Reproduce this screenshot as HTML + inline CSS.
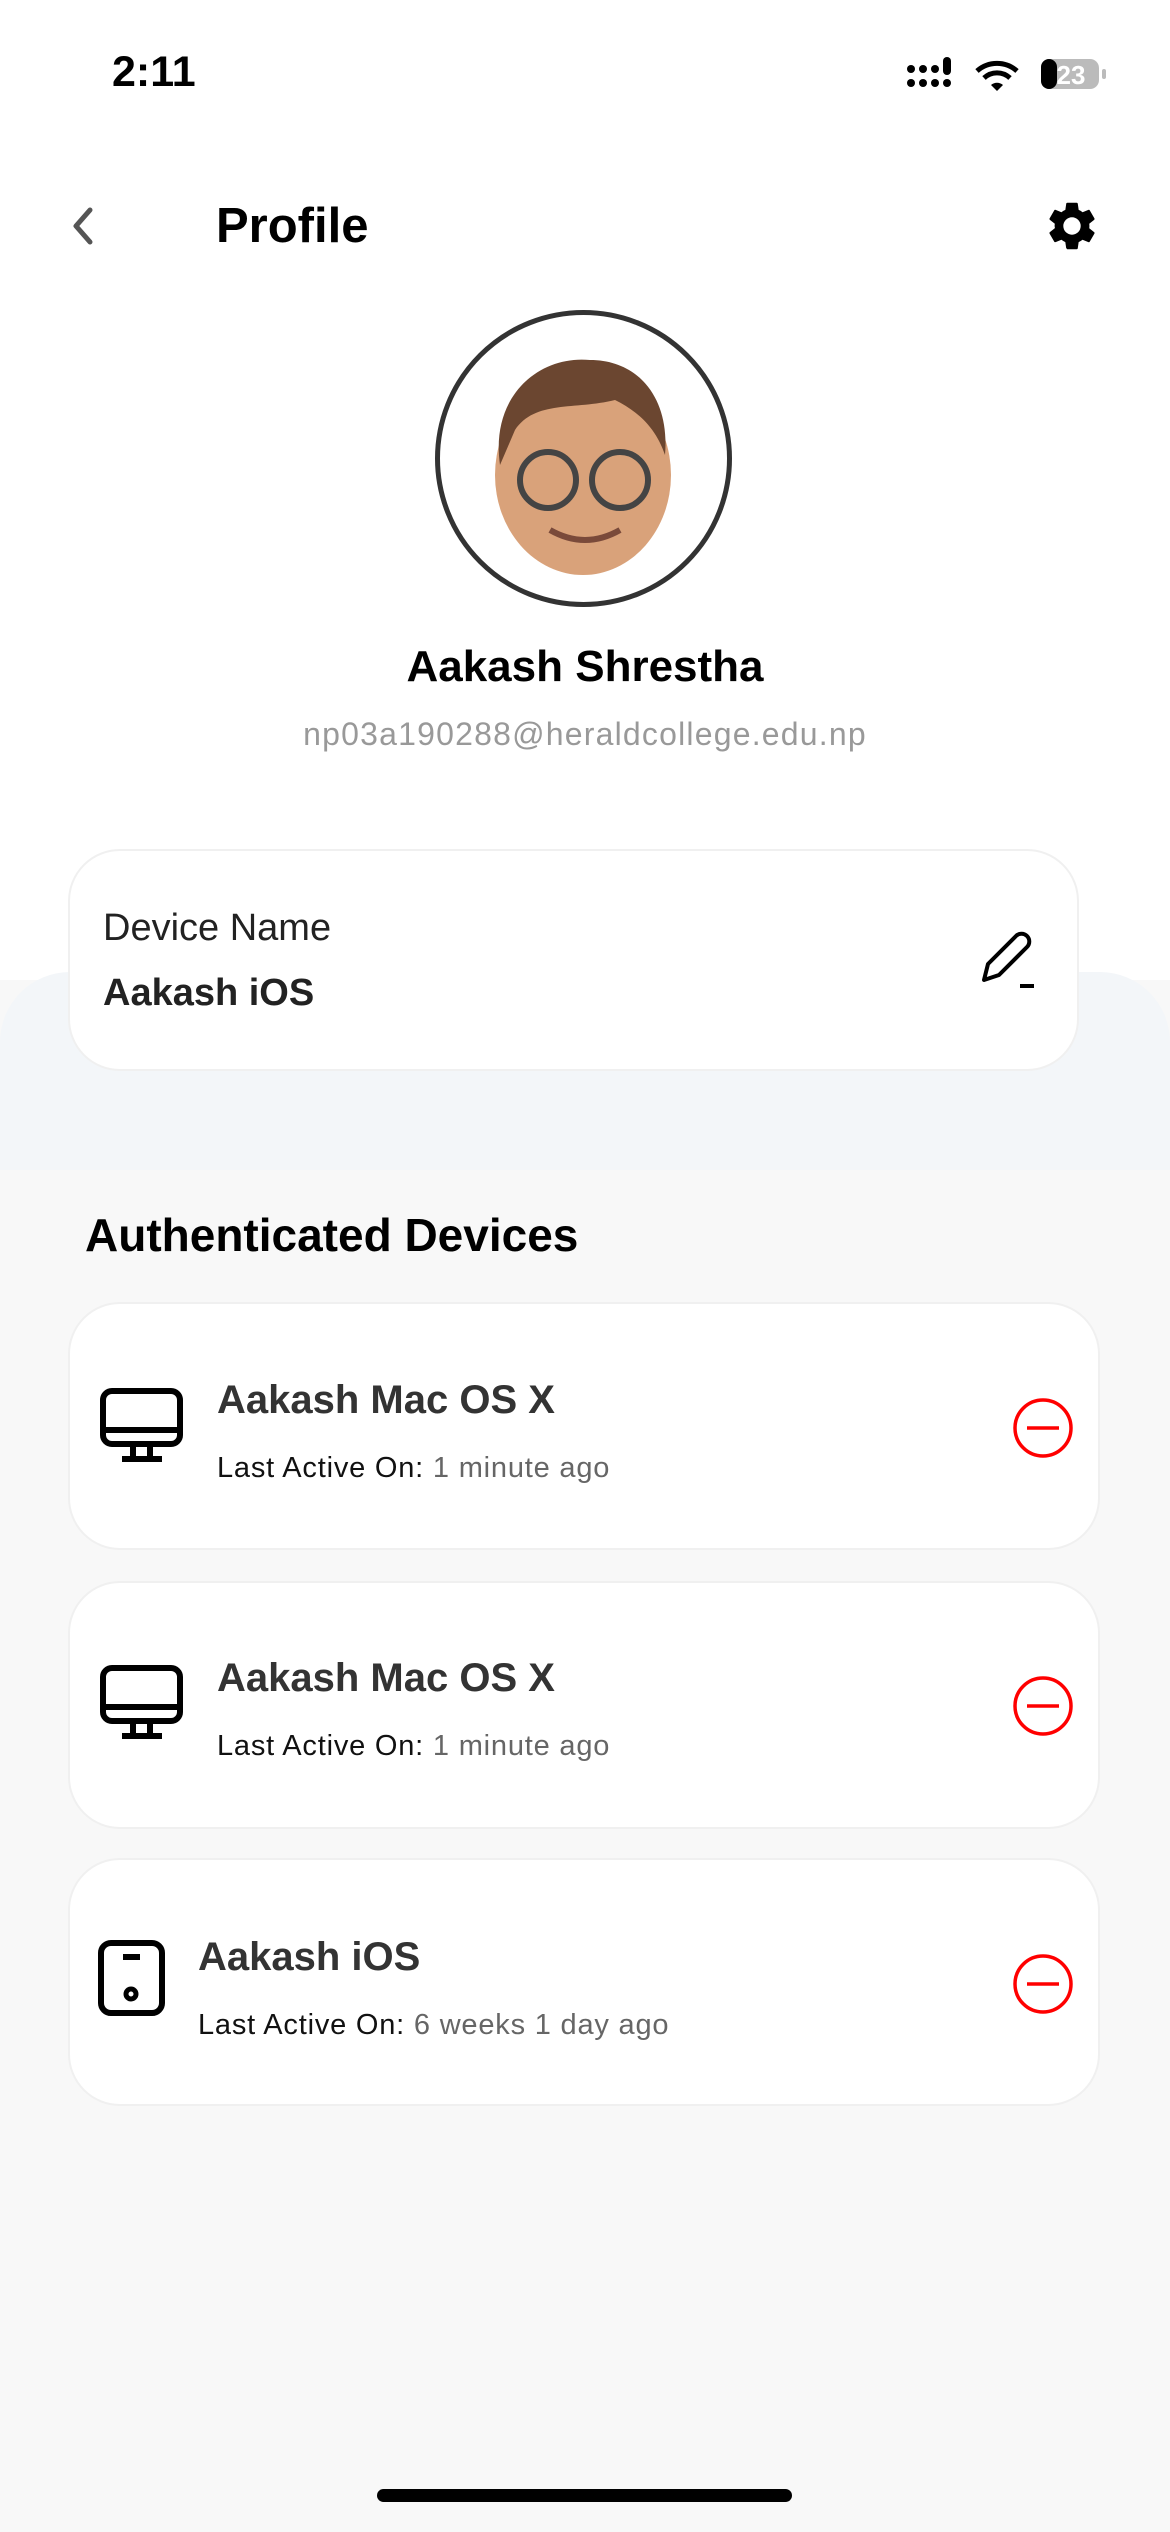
<!DOCTYPE html>
<html><head><meta charset="utf-8"><style>
*{margin:0;padding:0;box-sizing:border-box}
body{width:1170px;height:2532px;position:relative;background:#f8f8f8;font-family:"Liberation Sans",sans-serif;overflow:hidden}
.a{position:absolute}
.top{left:0;top:0;width:1170px;height:980px;background:#fff}
.blue{left:0;top:972px;width:1170px;height:198px;background:#f3f6f9;border-radius:70px 70px 0 0}
.card{background:#fff;border:2px solid #f0f0f0;border-radius:52px}
.t{font-weight:bold;color:#333;font-size:40px;white-space:nowrap}
.s{font-size:29px;color:#111;white-space:nowrap;letter-spacing:0.8px}
.s span{color:#666}
</style></head><body>
<div class="a top"></div>
<div class="a blue"></div>

<div class="a" style="left:112px;top:48px;font-size:43px;font-weight:bold;color:#000">2:11</div>
<svg class="a" style="left:905px;top:55px" width="210" height="40" viewBox="0 0 210 40">
<g fill="#000"><circle cx="6" cy="14" r="4"/><circle cx="18" cy="14" r="4"/><circle cx="30" cy="14" r="4"/><circle cx="42" cy="14" r="4"/>
<circle cx="6" cy="28" r="4"/><circle cx="18" cy="28" r="4"/><circle cx="30" cy="28" r="4"/><circle cx="42" cy="28" r="4"/>
<rect x="38" y="2" width="8" height="18" rx="4"/></g>
<path d="M72 16a30 30 0 0 1 40 0" stroke="#000" stroke-width="5" fill="none"/>
<path d="M79 23a19 19 0 0 1 26 0" stroke="#000" stroke-width="5" fill="none"/>
<path d="M86 30l6 6 6-6a9 9 0 0 0-12 0z" fill="#000"/>
<rect x="136" y="4" width="58" height="30" rx="9" fill="#bbb"/>
<rect x="136" y="4" width="16" height="30" rx="8" fill="#000"/>
<rect x="197" y="14" width="4" height="10" rx="2" fill="#bbb"/>
<text x="166" y="29" font-size="26" font-weight="bold" fill="#fff" text-anchor="middle" font-family="Liberation Sans">23</text>
</svg>

<svg class="a" style="left:68px;top:204px" width="30" height="44" viewBox="0 0 30 44"><path d="M22 6L8 22l14 16" stroke="#555" stroke-width="5" fill="none" stroke-linecap="round" stroke-linejoin="round"/></svg>
<div class="a" style="left:216px;top:198px;font-size:49px;font-weight:bold;color:#000">Profile</div>
<svg class="a" style="left:1043px;top:197px" width="58" height="58" viewBox="0 0 24 24"><path fill="#000" d="M19.14 12.94c.04-.3.06-.61.06-.94s-.02-.64-.07-.94l2.03-1.58a.49.49 0 0 0 .12-.61l-1.92-3.32a.49.49 0 0 0-.59-.22l-2.390.96c-.5-.38-1.030-.7-1.62-.94l-.36-2.54a.48.48 0 0 0-.48-.41h-3.84c-.24 0-.43.17-.47.41l-.36 2.54c-.59.24-1.130.57-1.62.94l-2.39-.96a.48.48 0 0 0-.59.22L2.74 8.87c-.12.21-.08.47.12.61l2.03 1.58c-.05.3-.09.63-.09.94s.2.64.07.94l-2.03 1.58a.49.49 0 0 0-.12.61l1.92 3.32c.12.22.37.29.59.22l2.39-.96c.5.38 1.03.7 1.62.94l.36 2.54c.5.24.24.41.48.41h3.84c.24 0 .44-.17.47-.41l.36-2.54c.59-.24 1.13-.56 1.62-.94l2.39.96c.22.08.47 0 .59-.22l1.92-3.32c.12-.22.07-.47-.12-.61l-2.01-1.58zM12 15.6A3.6 3.6 0 1 1 12 8.4a3.6 3.6 0 0 1 0 7.2z"/></svg>

<div class="a" style="left:435px;top:310px;width:297px;height:297px;border-radius:50%;border:5px solid #333;background:#fff;overflow:hidden">
<svg width="287" height="287" viewBox="0 0 287 287">
<ellipse cx="143" cy="160" rx="88" ry="100" fill="#d9a27a"/>
<path d="M60 150c-10-70 40-110 90-105 50 0 80 40 75 95-10-30-30-45-50-55-40 10-80 0-100 30z" fill="#6b4630"/>
<circle cx="108" cy="165" r="28" fill="none" stroke="#444" stroke-width="6"/>
<circle cx="180" cy="165" r="28" fill="none" stroke="#444" stroke-width="6"/>
<path d="M110 215q35 20 70 0" stroke="#7a4a3a" stroke-width="6" fill="none"/>
</svg></div>

<div class="a" style="left:0;top:642px;width:1170px;text-align:center;font-size:44px;font-weight:bold;color:#000">Aakash Shrestha</div>
<div class="a" style="left:0;top:716px;width:1170px;text-align:center;font-size:32px;color:#999;letter-spacing:1.2px">np03a190288@heraldcollege.edu.np</div>

<div class="a card" style="left:68px;top:849px;width:1011px;height:222px"></div>
<div class="a" style="left:103px;top:907px;font-size:38px;color:#222">Device Name</div>
<div class="a" style="left:103px;top:972px;font-size:38px;font-weight:bold;color:#222">Aakash iOS</div>
<svg class="a" style="left:980px;top:928px" width="60" height="66" viewBox="0 0 60 66"><path d="M4 52l4-16 28-28a7 7 0 0 1 11 11L19 47z" stroke="#000" stroke-width="4" fill="none" stroke-linejoin="round"/><path d="M40 58h14" stroke="#000" stroke-width="4"/></svg>

<div class="a" style="left:85px;top:1208px;font-size:46px;font-weight:bold;color:#000">Authenticated Devices</div>

<div class="a card" style="left:68px;top:1302px;width:1032px;height:248px"></div>
<div class="a card" style="left:68px;top:1581px;width:1032px;height:248px"></div>
<div class="a card" style="left:68px;top:1858px;width:1032px;height:248px"></div>

<svg class="a" style="left:100px;top:1388px" width="84" height="80" viewBox="0 0 84 80"><rect x="3" y="3" width="77" height="53" rx="9" stroke="#000" stroke-width="6" fill="none"/><path d="M3 42h77M33 56v12M50 56v12M22 71h40" stroke="#000" stroke-width="6"/></svg>
<div class="a t" style="left:217px;top:1378px">Aakash Mac OS X</div>
<div class="a s" style="left:217px;top:1452px">Last Active On: <span>1 minute ago</span></div>
<svg class="a" style="left:1012px;top:1397px" width="62" height="62" viewBox="0 0 62 62"><circle cx="31" cy="31" r="28" stroke="#f00" stroke-width="3.5" fill="none"/><path d="M15 31h32" stroke="#f00" stroke-width="3.5"/></svg>

<svg class="a" style="left:100px;top:1665px" width="84" height="80" viewBox="0 0 84 80"><rect x="3" y="3" width="77" height="53" rx="9" stroke="#000" stroke-width="6" fill="none"/><path d="M3 42h77M33 56v12M50 56v12M22 71h40" stroke="#000" stroke-width="6"/></svg>
<div class="a t" style="left:217px;top:1656px">Aakash Mac OS X</div>
<div class="a s" style="left:217px;top:1730px">Last Active On: <span>1 minute ago</span></div>
<svg class="a" style="left:1012px;top:1675px" width="62" height="62" viewBox="0 0 62 62"><circle cx="31" cy="31" r="28" stroke="#f00" stroke-width="3.5" fill="none"/><path d="M15 31h32" stroke="#f00" stroke-width="3.5"/></svg>

<svg class="a" style="left:98px;top:1940px" width="70" height="80" viewBox="0 0 70 80"><rect x="3" y="3" width="61" height="70" rx="10" stroke="#000" stroke-width="6" fill="none"/><path d="M25 17h17" stroke="#000" stroke-width="6"/><circle cx="33" cy="54" r="5" stroke="#000" stroke-width="5" fill="none"/></svg>
<div class="a t" style="left:198px;top:1935px">Aakash iOS</div>
<div class="a s" style="left:198px;top:2009px">Last Active On: <span>6 weeks 1 day ago</span></div>
<svg class="a" style="left:1012px;top:1953px" width="62" height="62" viewBox="0 0 62 62"><circle cx="31" cy="31" r="28" stroke="#f00" stroke-width="3.5" fill="none"/><path d="M15 31h32" stroke="#f00" stroke-width="3.5"/></svg>

<div class="a" style="left:377px;top:2489px;width:415px;height:13px;border-radius:7px;background:#000"></div>
</body></html>
